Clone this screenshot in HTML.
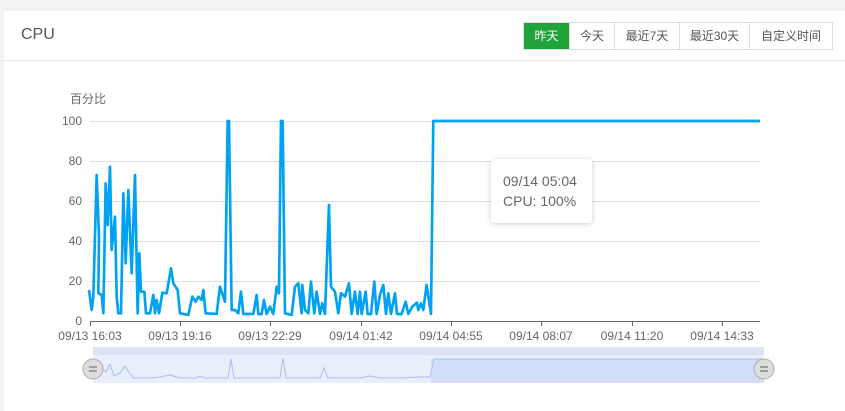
<!DOCTYPE html>
<html><head><meta charset="utf-8"><style>
body{margin:0;background:#f2f2f2;width:845px;height:400px;overflow:hidden;font-family:"Liberation Sans","Noto Sans CJK SC",sans-serif;}
.card{position:absolute;left:4px;top:11px;width:845px;height:400px;background:#fff;}
.hd{position:absolute;left:0;top:0;width:845px;height:49px;border-bottom:1px solid #e8e8e8;}
.title{position:absolute;left:17px;top:15px;font-size:16px;color:#555;}
.btns{position:absolute;left:519px;top:11px;display:flex;border:1px solid #ddd;height:26px;}
.btns div{font-size:12px;color:#555;line-height:26px;text-align:center;border-left:1px solid #ddd;box-sizing:border-box;}
.btns div:first-child{border-left:none;background:#21a33b;color:#fff;}
.tip{position:absolute;left:491px;top:159px;width:101px;height:64px;background:#fff;box-shadow:0 1px 6px rgba(0,0,0,.2);border-radius:3px;font-size:14px;color:#666;box-sizing:border-box;padding:12px 0 0 12px;line-height:20px;}
</style></head><body>
<div class="card"><div class="hd"><div class="title">CPU</div>
<div class="btns"><div style="width:45px">昨天</div><div style="width:45px">今天</div><div style="width:65px">最近7天</div><div style="width:70px">最近30天</div><div style="width:83px">自定义时间</div></div></div></div>
<svg width="845" height="400" style="position:absolute;left:0;top:0" font-family="Liberation Sans,Noto Sans CJK SC,sans-serif" font-size="12" fill="#666">
<text x="70" y="103" font-size="12">百分比</text>
<g stroke="#ddd" stroke-width="1">
<line x1="90" y1="121.5" x2="760" y2="121.5"/><line x1="90" y1="161.5" x2="760" y2="161.5"/><line x1="90" y1="201.5" x2="760" y2="201.5"/><line x1="90" y1="241.5" x2="760" y2="241.5"/><line x1="90" y1="281.5" x2="760" y2="281.5"/></g>
<line x1="90" y1="321.5" x2="760" y2="321.5" stroke="#666"/>
<g stroke="#666"><line x1="90.5" y1="321" x2="90.5" y2="326"/><line x1="180.5" y1="321" x2="180.5" y2="326"/><line x1="270.5" y1="321" x2="270.5" y2="326"/><line x1="361.5" y1="321" x2="361.5" y2="326"/><line x1="451.5" y1="321" x2="451.5" y2="326"/><line x1="541.5" y1="321" x2="541.5" y2="326"/><line x1="632.5" y1="321" x2="632.5" y2="326"/><line x1="722.5" y1="321" x2="722.5" y2="326"/></g>
<g text-anchor="end"><text x="82" y="125">100</text><text x="82" y="165">80</text><text x="82" y="205">60</text><text x="82" y="245">40</text><text x="82" y="285">20</text><text x="82" y="325">0</text></g>
<g text-anchor="middle"><text x="90" y="340">09/13 16:03</text><text x="180" y="340">09/13 19:16</text><text x="270" y="340">09/13 22:29</text><text x="361" y="340">09/14 01:42</text><text x="451" y="340">09/14 04:55</text><text x="541" y="340">09/14 08:07</text><text x="632" y="340">09/14 11:20</text><text x="722" y="340">09/14 14:33</text></g>
<g transform="translate(85,110) scale(0.3333)">
<polyline fill="none" stroke="#00a2f2" stroke-width="8" stroke-linejoin="round" points="12,540 20,600 25,560 35,195 42,380 40,550 50,555 55,610 62,220 68,345 75,170 80,420 90,320 95,560 100,610 108,610 115,250 122,460 130,240 140,490 150,195 158,610 163,430 168,545 178,545 183,610 195,610 205,555 210,610 215,570 222,610 232,548 245,550 258,475 265,520 278,540 285,610 310,615 322,560 332,575 340,560 350,570 355,540 362,610 395,612 405,530 420,575 428,33 432,33 440,600 450,600 460,610 468,545 475,612 505,612 515,555 520,612 530,612 537,570 545,612 555,590 565,612 575,530 582,550 588,33 593,33 600,610 620,615 630,530 640,520 650,610 652,525 660,600 670,610 678,515 688,610 695,545 705,612 712,580 720,612 732,285 738,530 750,545 760,610 768,550 780,560 792,520 800,612 810,545 818,612 825,545 830,612 842,545 848,612 858,612 868,515 875,612 885,555 895,525 903,612 910,550 918,612 930,550 936,612 950,612 962,575 970,612 982,590 996,578 1000,600 1008,580 1015,600 1025,525 1038,612 1045,33 2025,33"/>
</g>
<rect x="93" y="347" width="671" height="36" fill="#e9eefb"/>
<rect x="93" y="347" width="671" height="8" fill="#dbe3f4"/>
<rect x="431" y="359" width="333" height="24" fill="#d2ddf8"/>
<polyline fill="none" stroke="#a9bdf0" stroke-width="1" points="95,375 100,367 106,372 110,364 114,376 120,373 125,366 130,374 134,378 150,378 160,377 170,375 180,378 196,378 200,376 205,378 228,378 231,359 234,378 280,378 283,358 286,378 320,378 324,368 328,378 360,378 370,376 380,378 400,378 420,377 430,377 434,359 764,359"/>
<g fill="#ddd" stroke="#aaa"><circle cx="93" cy="369" r="10"/><circle cx="764" cy="369" r="10"/></g>
<g stroke="#888" stroke-width="1.5"><line x1="89" y1="367" x2="97" y2="367"/><line x1="89" y1="371" x2="97" y2="371"/><line x1="760" y1="367" x2="768" y2="367"/><line x1="760" y1="371" x2="768" y2="371"/></g>
</svg>
<div class="tip">09/14 05:04<br>CPU: 100%</div>
</body></html>
